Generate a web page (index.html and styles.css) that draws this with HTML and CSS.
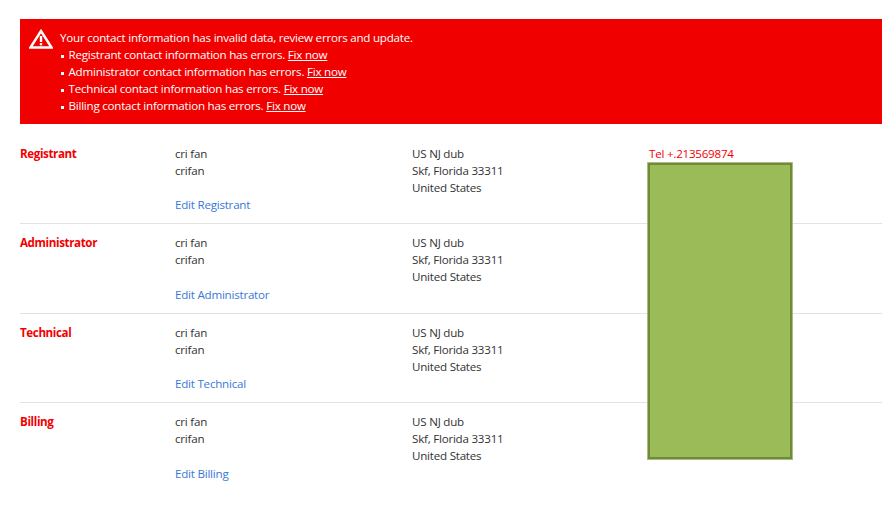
FILE: index.html
```html
<!DOCTYPE html>
<html lang="en">
<head>
<meta charset="utf-8">
<title>Contact information</title>
<link rel="stylesheet" href="styles.css">
</head>
<body>
<div class="alert">
  <svg class="alert-icon" width="24" height="20" viewBox="0 0 24 20" aria-hidden="true">
    <path class="tri" d="M12 2 L22.5 18.5 H1.5 Z"/>
    <rect class="mark" x="10.8" y="7" width="2.4" height="6"/>
    <rect class="mark" x="10.8" y="14" width="2.4" height="2.4"/>
  </svg>
  <div class="alert-text">
    <div>Your contact information has invalid data, review errors and update.</div>
    <ul class="alert-list">
      <li>Registrant contact information has errors. <a href="#">Fix now</a></li>
      <li>Administrator contact information has errors. <a href="#">Fix now</a></li>
      <li>Technical contact information has errors. <a href="#">Fix now</a></li>
      <li>Billing contact information has errors. <a href="#">Fix now</a></li>
    </ul>
  </div>
</div>
<div class="contacts">
  <section class="row">
    <h3 class="role">Registrant</h3>
    <div><div>cri fan</div><div>crifan</div><a class="edit" href="#">Edit Registrant</a></div>
    <div><div>US NJ dub</div><div>Skf, Florida 33311</div><div>United States</div></div>
    <div class="tel">Tel +.213569874</div>
  </section>
  <section class="row">
    <h3 class="role">Administrator</h3>
    <div><div>cri fan</div><div>crifan</div><a class="edit" href="#">Edit Administrator</a></div>
    <div><div>US NJ dub</div><div>Skf, Florida 33311</div><div>United States</div></div>
    <div></div>
  </section>
  <section class="row">
    <h3 class="role">Technical</h3>
    <div><div>cri fan</div><div>crifan</div><a class="edit" href="#">Edit Technical</a></div>
    <div><div>US NJ dub</div><div>Skf, Florida 33311</div><div>United States</div></div>
    <div></div>
  </section>
  <section class="row">
    <h3 class="role">Billing</h3>
    <div><div>cri fan</div><div>crifan</div><a class="edit" href="#">Edit Billing</a></div>
    <div><div>US NJ dub</div><div>Skf, Florida 33311</div><div>United States</div></div>
    <div></div>
  </section>
  <div class="redaction"></div>
</div>
</body>
</html>
```
FILE: styles.css
```css
* { box-sizing: border-box; }
html, body { margin: 0; background: #fff; }
body {
  padding: 19px 1px 0 20px;
  font-family: "Open Sans", "Noto Sans", sans-serif;
  font-size: 11.6px;
  letter-spacing: -0.23px;
  line-height: 17.14px;
  color: #333;
}
.alert {
  display: flex;
  background: #f10000;
  color: #fff;
  height: 105px;
  padding: 10px 0 0 9px;
  line-height: 17px;
}
.alert-icon { flex: none; margin-right: 7px; }
.tri { fill: none; stroke: #fff; stroke-width: 2.4; stroke-linejoin: miter; }
.mark { fill: #fff; }
.alert-list { list-style: none; margin: 0; padding: 0; }
.alert-list li::before {
  content: "";
  display: inline-block;
  width: 3px;
  height: 3px;
  margin: 0 4.5px 1.5px 1px;
  background: #fff;
}
.alert a { color: #fff; text-decoration: underline; }
.contacts { position: relative; margin-top: 10.6px; }
.row {
  display: grid;
  grid-template-columns: 155px 237px 237px 1fr;
  height: 89.5px;
  padding-top: 10px;
  border-bottom: 1px solid #e3e3e3;
}
.row:last-of-type { border-bottom: 0; }
.role { margin: 0; font-size: 11.6px; font-weight: 700; letter-spacing: -0.38px; color: #f10000; }
.edit { display: block; margin-top: 17.14px; color: #3a78d8; text-decoration: none; }
.tel { color: #f10000; }
.redaction {
  position: absolute;
  left: 628px;
  top: 28.4px;
  width: 144px;
  height: 296px;
  background: #9bbb59;
  border: 2px solid #6f8a38;
  box-shadow: 0 0 0 1px #a9bd82;
}
```
